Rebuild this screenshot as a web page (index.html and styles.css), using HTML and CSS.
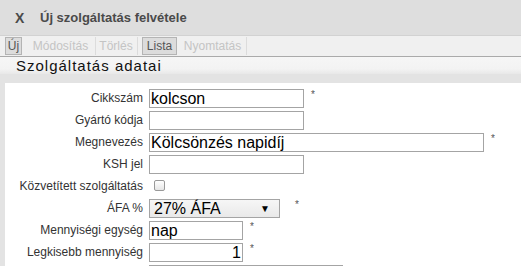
FILE: index.html
```html
<!DOCTYPE html>
<html lang="hu">
<head>
  <meta charset="UTF-8">
  <title>Új szolgáltatás felvétele</title>
  <link rel="stylesheet" href="styles.css">
</head>
<body>
  <div class="titlebar">
    <span class="close">X</span>
    <span class="title">Új szolgáltatás felvétele</span>
  </div>

  <div class="toolbar">
    <span class="tb-btn active b-new">Új</span>
    <span class="tb-btn disabled b-edit">Módosítás</span>
    <span class="tb-sep"></span>
    <span class="tb-btn disabled b-del">Törlés</span>
    <span class="tb-sep"></span>
    <span class="tb-btn active b-list">Lista</span>
    <span class="tb-btn disabled b-print">Nyomtatás</span>
    <span class="tb-sep"></span>
  </div>

  <div class="section-head">Szolgáltatás adatai</div>

  <div class="panel">
    <form class="form">
      <label class="lbl">Cikkszám</label>
      <div class="ctl"><input class="inp w155" type="text" value="kolcson"><span class="req">*</span></div>

      <label class="lbl">Gyártó kódja</label>
      <div class="ctl"><input class="inp w155" type="text"></div>

      <label class="lbl">Megnevezés</label>
      <div class="ctl"><input class="inp w335" type="text" value="Kölcsönzés napidíj"><span class="req">*</span></div>

      <label class="lbl">KSH jel</label>
      <div class="ctl"><input class="inp w155" type="text"></div>

      <label class="lbl">Közvetített szolgáltatás</label>
      <div class="ctl"><span class="check"></span></div>

      <label class="lbl">ÁFA %</label>
      <div class="ctl"><span class="select">27% ÁFA<span class="arrow">▼</span></span><span class="req">*</span></div>

      <label class="lbl">Mennyiségi egység</label>
      <div class="ctl"><input class="inp w94" type="text" value="nap"><span class="req">*</span></div>

      <label class="lbl">Legkisebb mennyiség</label>
      <div class="ctl"><input class="inp w94 num" type="text" value="1"><span class="req">*</span></div>

      <label class="lbl"></label>
      <div class="ctl"><input class="inp w194" type="text"></div>
    </form>
  </div>
</body>
</html>
```

FILE: styles.css
```css
body {
  margin: 0;
  background: #e3e3e3;
  font-family: "Liberation Sans", Arial, sans-serif;
  color: #333;
  overflow: hidden;
}

.titlebar {
  height: 35px;
  background: #dedede;
  display: flex;
  align-items: center;
  padding-left: 15px;
  box-sizing: border-box;
  color: #4a4a4a;
  font-weight: bold;
}

.close {
  font-size: 14px;
  width: 25px;
}

.title {
  font-size: 13px;
}

.toolbar {
  height: 20px;
  background: #f0f0f0;
  border-top: 1px solid #d2d2d2;
  border-bottom: 1px solid #aaa;
  display: flex;
  align-items: center;
  padding-left: 5px;
  font-size: 12px;
}

.tb-btn {
  height: 18px;
  line-height: 16px;
  text-align: center;
  border: 1px solid transparent;
  box-sizing: border-box;
  white-space: nowrap;
}

.tb-btn.active {
  background: #dcdcdc;
  border-color: #b4b4b4;
  color: #555;
}

.tb-btn.disabled {
  color: #c4c4c4;
}

.b-new { width: 17px; }
.b-edit { width: 61px; margin-left: 8px; margin-right: 4px; }
.b-del { width: 36px; margin-left: 2px; margin-right: 3px; }
.b-list { width: 35px; margin-left: 4px; }
.b-print { width: 61px; margin-left: 5px; margin-right: 3px; }

.tb-sep {
  width: 1px;
  height: 18px;
  background: #dcdcdc;
}

.section-head {
  height: 17px;
  line-height: 17px;
  padding-left: 16px;
  background: linear-gradient(#f6f6f6, #f3f3f3 70%, #e8e8e8);
  font-size: 15px;
  letter-spacing: 1px;
  color: #111;
}

.panel {
  margin-top: 9px;
  margin-left: 5px;
  background: #fff;
  padding-top: 6px;
  height: 300px;
}

.form {
  display: grid;
  grid-template-columns: 138px auto;
  grid-auto-rows: 22px;
  column-gap: 6px;
  margin: 0;
}

.lbl {
  text-align: right;
  font-size: 12px;
  line-height: 19px;
  color: #333;
  white-space: nowrap;
}

.ctl {
  display: flex;
  align-items: flex-start;
}

.inp {
  height: 19px;
  box-sizing: border-box;
  border: 1px solid #a4a4a4;
  padding: 0 1px;
  margin: 0;
  font-family: "Liberation Sans", Arial, sans-serif;
  font-size: 16px;
  color: #000;
  outline: none;
  background: #fff;
}

.num {
  text-align: right;
}

.w94 { width: 94px; }
.w155 { width: 155px; }
.w194 { width: 194px; }
.w335 { width: 335px; }

.req {
  font-size: 10px;
  color: #555;
  margin-left: 7px;
  line-height: 12px;
}

.check {
  width: 11px;
  height: 11px;
  margin: 3px 0 0 5px;
  border: 1px solid #999;
  border-radius: 2px;
  background: linear-gradient(#fff, #e6e6e6);
  box-sizing: border-box;
}

.select {
  width: 131px;
  height: 19px;
  box-sizing: border-box;
  border: 1px solid #a4a4a4;
  background: linear-gradient(#f6f6f6, #e9e9e9);
  font-size: 16px;
  line-height: 17px;
  padding-left: 4px;
  color: #000;
  display: flex;
  justify-content: space-between;
  margin-right: 8px;
}

.arrow {
  font-size: 10px;
  padding-right: 9px;
}
```
